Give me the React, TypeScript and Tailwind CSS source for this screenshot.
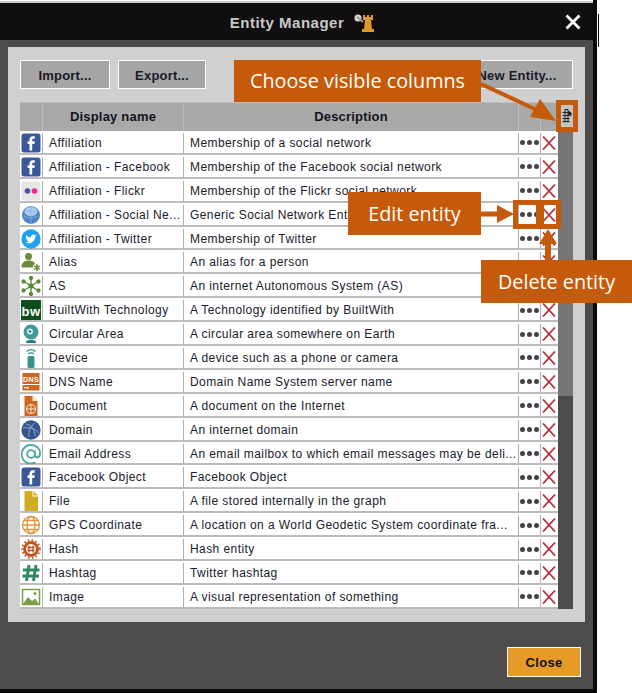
import type { ReactNode } from "react"

const FONT = "font-['Liberation_Sans',Arial,sans-serif]"

const FbIcon = () => (
  <svg viewBox="0 0 20 20" className="w-[20px] h-[20px]">
    <rect x="0.5" y="0.5" width="19" height="19" rx="2.5" fill="#3b5998" />
    <path d="M13.8 3.2h-2.1c-2 0-3.2 1.3-3.2 3.3v1.8H6.6v2.6h1.9v6.6h2.7v-6.6h2.2l.4-2.6h-2.6V6.8c0-.7.3-1.1 1.1-1.1h1.5z" fill="#fff" />
  </svg>
)

const FlickrIcon = () => (
  <svg viewBox="0 0 20 20" className="w-[20px] h-[20px]">
    <rect x="0.5" y="0.5" width="19" height="19" rx="2.5" fill="#e6e6e6" />
    <circle cx="6.5" cy="10" r="2.8" fill="#3f5aa6" />
    <circle cx="13.5" cy="10" r="2.8" fill="#ff1f8e" />
  </svg>
)

const GlobeIcon = () => (
  <svg viewBox="0 0 20 20" className="w-[20px] h-[20px]">
    <circle cx="10" cy="10" r="9" fill="#4d87c7" />
    <ellipse cx="10" cy="6.5" rx="6.5" ry="4.5" fill="#a9cdf0" />
    <path d="M3 11c3 2 11 2 14 0M10 1v18M4 5c4 2 8 2 12 0" stroke="#8cb4dd" strokeWidth="0.7" fill="none" />
  </svg>
)

const TwitterIcon = () => (
  <svg viewBox="0 0 20 20" className="w-[20px] h-[20px]">
    <circle cx="10" cy="10" r="9.7" fill="#1da1f2" />
    <path d="M15.6 6.5c-.4.2-.8.3-1.3.4.5-.3.8-.7 1-1.2-.4.3-.9.4-1.4.5a2.3 2.3 0 0 0-3.9 2.1C8 8.2 6.3 7.3 5.2 5.9c-.6 1-.3 2.3.7 3-.4 0-.7-.1-1-.3 0 1.1.8 2.1 1.8 2.3-.3.1-.7.1-1 0 .3.9 1.1 1.5 2.1 1.6-.9.7-2.2 1.1-3.4.9 3.6 2.3 9.8.5 9.9-6.1.5-.3.9-.7 1.3-1.8z" fill="#fff" />
  </svg>
)

const AliasIcon = () => (
  <svg viewBox="0 0 20 20" className="w-[20px] h-[20px]">
    <circle cx="7.5" cy="4.5" r="3.5" fill="#6c8b3c" />
    <path d="M0.5 15c0-4 3-6.5 7-6.5s6 1.5 6.5 3.5c-1.5.5-2 1.8-2 3.5H1.5c-.6 0-1-.2-1-.5z" fill="#6c8b3c" />
    <path d="M16 12v7M13 13.800l6 3.500M19 13.800l-6 3.500" stroke="#6c8b3c" strokeWidth="1.500" />
  </svg>
)

const AsIcon = () => (
  <svg viewBox="0 0 20 20" className="w-[20px] h-[20px]" stroke="#5d8a3a" strokeWidth="1.300" fill="#5d8a3a">
    <path d="M10 2v16M3 5.500l14 9M17 5.500l-14 9" />
    <circle cx="10" cy="10" r="2" />
    <circle cx="10" cy="2" r="1.500" />
    <circle cx="10" cy="18" r="1.500" />
    <circle cx="2.500" cy="5.500" r="1.500" />
    <circle cx="17.500" cy="5.500" r="1.500" />
    <circle cx="2.500" cy="14.500" r="1.500" />
    <circle cx="17.500" cy="14.500" r="1.500" />
  </svg>
)

const BuiltWithIcon = () => (
  <svg viewBox="0 0 20 20" className="w-[20px] h-[20px]">
    <rect width="20" height="20" fill="#0d4f1c" />
    <text x="10" y="16" textAnchor="middle" fontSize="13" fontWeight="700" fill="#fff" fontFamily="Liberation Sans">bw</text>
  </svg>
)

const CircularIcon = () => (
  <svg viewBox="0 0 20 20" className="w-[20px] h-[20px]">
    <circle cx="10" cy="8" r="7.500" fill="#3f9a96" />
    <circle cx="9" cy="7.500" r="3" fill="#d9efee" />
    <circle cx="9" cy="7.500" r="1.300" fill="#2a7a77" />
    <path d="M5 17.500c2-2 8-2 10 0v1.500H5z" fill="#2a7a77" />
  </svg>
)

const DeviceIcon = () => (
  <svg viewBox="0 0 20 20" className="w-[20px] h-[20px]">
    <path d="M5.500 3.500c3-2.500 6-2.500 9 0M7 6c2-1.500 4-1.500 6 0" stroke="#37918d" strokeWidth="1.300" fill="none" />
    <rect x="6.500" y="8" width="7" height="12" rx="1.500" fill="#37918d" />
  </svg>
)

const DnsIcon = () => (
  <svg viewBox="0 0 20 20" className="w-[20px] h-[20px]">
    <rect x="1.500" y="1" width="17" height="11" fill="#d0651f" />
    <text x="10" y="9.500" textAnchor="middle" fontSize="7" fontWeight="700" fill="#fff" fontFamily="Liberation Sans">DNS</text>
    <rect x="1.500" y="13" width="17" height="5.500" fill="#d0651f" />
    <rect x="3" y="15" width="5" height="1.300" fill="#fff" />
  </svg>
)

const DocumentIcon = () => (
  <svg viewBox="0 0 20 20" className="w-[20px] h-[20px]">
    <path d="M3.500 0h8l5 5v15h-13z" fill="#d0651f" />
    <path d="M11.500 0v5h5" fill="#fbe3d0" />
    <circle cx="10" cy="13" r="4.500" fill="none" stroke="#fff" strokeWidth="0.900" />
    <path d="M5.500 13h9M10 8.500v9" stroke="#fff" strokeWidth="0.800" />
  </svg>
)

const DomainIcon = () => (
  <svg viewBox="0 0 20 20" className="w-[20px] h-[20px]">
    <circle cx="10" cy="10" r="9.700" fill="#34558f" />
    <path d="M5 4c5 1 9 5 9 12M14 3c-4 3-7 7-6 14M2 8c5-1 12 0 16 5" stroke="#a7b8d4" strokeWidth="0.800" fill="none" />
  </svg>
)

const EmailIcon = () => (
  <svg viewBox="0 0 20 20" className="w-[20px] h-[20px]">
    <circle cx="10" cy="10" r="3.800" fill="none" stroke="#4fa5a0" strokeWidth="1.800" />
    <path d="M13.800 6.500v5c0 2.500 4.700 2.500 5.200-1 .7-5.500-3.500-9.500-9-9.500a9.300 9.300 0 1 0 4.500 17.400" fill="none" stroke="#4fa5a0" strokeWidth="1.800" />
  </svg>
)

const FileIcon = () => (
  <svg viewBox="0 0 20 20" className="w-[20px] h-[20px]">
    <path d="M3.500 0h8v5.500h5.500v14.500h-13.500z" fill="#d2ab26" />
    <path d="M12.500 0l4.500 4.500h-4.500z" fill="#d2ab26" />
  </svg>
)

const GpsIcon = () => (
  <svg viewBox="0 0 20 20" className="w-[20px] h-[20px]" fill="none" stroke="#e0953f" strokeWidth="1.300">
    <circle cx="10" cy="10" r="8.500" />
    <ellipse cx="10" cy="10" rx="4" ry="8.500" />
    <path d="M1.500 10h17M3 5.500h14M3 14.500h14" />
  </svg>
)

const HashIcon = () => (
  <svg viewBox="0 0 20 20" className="w-[20px] h-[20px]" fill="none">
    <circle cx="10" cy="10" r="6.500" stroke="#c2521a" strokeWidth="2.800" />
    <circle cx="10" cy="10" r="8.800" stroke="#c2521a" strokeWidth="2" strokeDasharray="1.500 2.300" />
    <path d="M8 6.500v7M12 6.500v7M6.500 8.500h7M6.500 11.500h7" stroke="#c2521a" strokeWidth="1.300" />
  </svg>
)

const HashtagIcon = () => (
  <svg viewBox="0 0 20 20" className="w-[20px] h-[20px]" stroke="#2f8a62" strokeWidth="3" fill="none">
    <path d="M8 2L5.500 18M15 2l-2.500 16M2 7h16.500M1.500 13h16.500" />
  </svg>
)

const ImageIcon = () => (
  <svg viewBox="0 0 20 20" className="w-[20px] h-[20px]">
    <rect x="1.500" y="2.500" width="17" height="15" fill="#fff" stroke="#7d9f4c" strokeWidth="1.500" />
    <path d="M2 17l5-7 4 4 3-2.500 4 5.500z" fill="#7d9f4c" />
    <circle cx="14" cy="6.500" r="1.500" fill="#7d9f4c" />
  </svg>
)

const rows: { icon: ReactNode; name: string; description: string }[] = [
  { icon: <FbIcon />, name: "Affiliation", description: "Membership of a social network" },
  { icon: <FbIcon />, name: "Affiliation - Facebook", description: "Membership of the Facebook social network" },
  { icon: <FlickrIcon />, name: "Affiliation - Flickr", description: "Membership of the Flickr social network" },
  { icon: <GlobeIcon />, name: "Affiliation - Social Ne...", description: "Generic Social Network Entity" },
  { icon: <TwitterIcon />, name: "Affiliation - Twitter", description: "Membership of Twitter" },
  { icon: <AliasIcon />, name: "Alias", description: "An alias for a person" },
  { icon: <AsIcon />, name: "AS", description: "An internet Autonomous System (AS)" },
  { icon: <BuiltWithIcon />, name: "BuiltWith Technology", description: "A Technology identified by BuiltWith" },
  { icon: <CircularIcon />, name: "Circular Area", description: "A circular area somewhere on Earth" },
  { icon: <DeviceIcon />, name: "Device", description: "A device such as a phone or camera" },
  { icon: <DnsIcon />, name: "DNS Name", description: "Domain Name System server name" },
  { icon: <DocumentIcon />, name: "Document", description: "A document on the Internet" },
  { icon: <DomainIcon />, name: "Domain", description: "An internet domain" },
  { icon: <EmailIcon />, name: "Email Address", description: "An email mailbox to which email messages may be deli..." },
  { icon: <FbIcon />, name: "Facebook Object", description: "Facebook Object" },
  { icon: <FileIcon />, name: "File", description: "A file stored internally in the graph" },
  { icon: <GpsIcon />, name: "GPS Coordinate", description: "A location on a World Geodetic System coordinate fra..." },
  { icon: <HashIcon />, name: "Hash", description: "Hash entity" },
  { icon: <HashtagIcon />, name: "Hashtag", description: "Twitter hashtag" },
  { icon: <ImageIcon />, name: "Image", description: "A visual representation of something" },
]

function ToolButton({ label, className }: { label: string; className: string }) {
  return (
    <button className={`h-[29px] pt-[2px] bg-[#a6a6a6] border border-white text-[13px] font-bold text-[#1a1a2a] tracking-[0.2px] ${className}`}>
      {label}
    </button>
  )
}

function EntityRow({ icon, name, description }: { icon: ReactNode; name: string; description: string }) {
  return (
    <div className="flex h-[23.9px] pt-[2px] bg-white border-b-2 border-[#bcbcbc] text-[12px] text-[#20202c] tracking-[0.42px]">
      <div className="w-[23px] shrink-0 flex items-center pl-[1px] border-r border-[#b0b0b0]">{icon}</div>
      <div className="w-[141px] shrink-0 pl-[6px] flex items-center whitespace-nowrap border-r border-[#b0b0b0]">{name}</div>
      <div className="w-[335px] shrink-0 pl-[6px] flex items-center whitespace-nowrap border-r border-[#b0b0b0]">{description}</div>
      <div className="w-[22px] shrink-0 flex items-center pl-[1px] gap-[2px] border-r border-[#b0b0b0]">
        <span className="w-[5px] h-[5px] rounded-full bg-[#444]" />
        <span className="w-[5px] h-[5px] rounded-full bg-[#444]" />
        <span className="w-[5px] h-[5px] rounded-full bg-[#444]" />
      </div>
      <div className="flex-1 flex items-center pl-[1px]">
        <svg viewBox="0 0 14 14" className="w-[14px] h-[14px]" stroke="#b8323a" strokeWidth="1.800" fill="none">
          <path d="M1 0.500L13 13.500M13 0.500L1 13.500" />
        </svg>
      </div>
    </div>
  )
}

function Callout({ text, className }: { text: string; className: string }) {
  return (
    <div className={`absolute bg-[#c55a0a] text-white flex items-center justify-center font-['Open_Sans',sans-serif] text-[19.8px] whitespace-nowrap ${className}`}>
      {text}
    </div>
  )
}

export default function App() {
  return (
    <div className={`relative w-[632px] h-[693px] bg-white overflow-hidden ${FONT}`}>
      <div className="w-[597px] h-[693px] flex flex-col border-r-[4px] border-b-[4px] border-[#0c0a0b]">
        <div className="h-[3px] bg-[#c8c8c8] border-t border-white" />
        <div className="h-[37px] pl-[11px] pt-[3px] bg-[#110e0f] flex items-center justify-center relative">
          <span className="text-[15px] font-bold text-[#c9c9c9] tracking-[0.5px]">Entity Manager</span>
          <svg viewBox="0 0 20 20" className="w-[20px] h-[20px] ml-[10px]">
            <circle cx="4" cy="5" r="3.500" fill="#d8d8d8" />
            <path d="M3 4l6 5" stroke="#9a9a9a" strokeWidth="2" />
            <path d="M9 2h2v2h2V2h2v2h2V2h2v5h-2l1 9h2v3H8v-3h2l1-9H9z" fill="#e09a2c" />
          </svg>
          <svg viewBox="0 0 16 16" className="absolute right-[12px] top-[11px] w-[16px] h-[16px]" stroke="#fff" strokeWidth="2.800" fill="none">
            <path d="M1.500 1.500l13 13M14.500 1.500l-13 13" />
          </svg>
        </div>
        <div className="flex-1 bg-[#4d4b4c] flex flex-col pl-[8px] pr-[8px]">
          <div className="mt-[7px] h-[575px] bg-[#d0d0d0] px-[12px] pt-[13px] flex flex-col">
            <div className="flex gap-[8px]">
              <ToolButton label="Import..." className="w-[90px]" />
              <ToolButton label="Export..." className="w-[88px]" />
              <ToolButton label="New Entity..." className="w-[112px] ml-auto" />
            </div>
            <div className="mt-[13px] w-[553px]">
              <div className="flex h-[29px] bg-[#a9a9a9] border-t border-[#bdbdbd] text-[13px] font-bold text-[#14141f] tracking-[0.2px]">
                <div className="w-[23px] shrink-0 border-r border-[#bdbdbd]" />
                <div className="w-[141px] shrink-0 flex items-center justify-center border-r border-[#bdbdbd]">Display name</div>
                <div className="w-[335px] shrink-0 flex items-center justify-center border-r border-[#bdbdbd]">Description</div>
                <div className="w-[22px] shrink-0 border-r border-[#bdbdbd]" />
                <div className="flex-1" />
              </div>
              <div className="flex">
                <div className="w-[538px] shrink-0 flex flex-col">
                  {rows.map((row) => (
                    <EntityRow key={row.name} icon={row.icon} name={row.name} description={row.description} />
                  ))}
                </div>
                <div className="flex-1 bg-[#4d4b4c]">
                  <div className="h-[265px] bg-[#777577]" />
                </div>
              </div>
            </div>
          </div>
          <div className="flex justify-end mt-[25px] pr-[4px]">
            <button className="w-[74px] h-[30px] pt-[2px] bg-[#e69a28] border border-white text-[13px] font-bold text-[#111] tracking-[0.3px]">Close</button>
          </div>
        </div>
      </div>

      {/* stray line next to the window in the capture */}
      <div className="absolute left-[598px] top-[14px] w-[1px] h-[33px] bg-black" />

      {/* annotations */}
      <Callout text="Choose visible columns" className="left-[234px] top-[60px] w-[247px] h-[42px]" />
      <Callout text="Edit entity" className="left-[348px] top-[192px] w-[133px] h-[43px]" />
      <Callout text="Delete entity" className="left-[481px] top-[260px] w-[151px] h-[43px]" />

      <div className="absolute left-[556px] top-[100px] w-[22px] h-[32px] border-[5px] border-[#c55a0a] bg-[#c4c4c4] flex items-center justify-center">
        <svg viewBox="0 0 12 16" className="w-[12px] h-[16px]" stroke="#222" strokeWidth="1" fill="none">
          <path d="M1.500 4.500h7M1.500 7.500h7M1.500 10.500h7M1.500 13.500h7M4 1.500v13M7 1.500v13M4 1.500h3" />
          <path d="M7.500 2.500l4 3.500-1.700.3.800 1.900-.9.400-.8-1.900-1.400 1z" fill="#111" stroke="none" />
        </svg>
      </div>
      <div className="absolute left-[513px] top-[200px] w-[28px] h-[29px] border-[5px] border-[#c55a0a]" />
      <div className="absolute left-[539px] top-[200px] w-[22px] h-[29px] border-[5px] border-[#c55a0a]" />

      <svg className="absolute left-0 top-0 w-[632px] h-[693px] pointer-events-none" viewBox="0 0 632 693">
        <path d="M481 84l58 27" stroke="#c55a0a" strokeWidth="4" />
        <path d="M556 121l-26 -4 10 -18z" fill="#c55a0a" />
        <path d="M481 214h18" stroke="#c55a0a" strokeWidth="5" />
        <path d="M514 214l-17 -9v18z" fill="#c55a0a" />
        <path d="M548 260v-18" stroke="#c55a0a" strokeWidth="6" />
        <path d="M548 229l9 15h-18z" fill="#c55a0a" />
      </svg>
    </div>
  )
}
